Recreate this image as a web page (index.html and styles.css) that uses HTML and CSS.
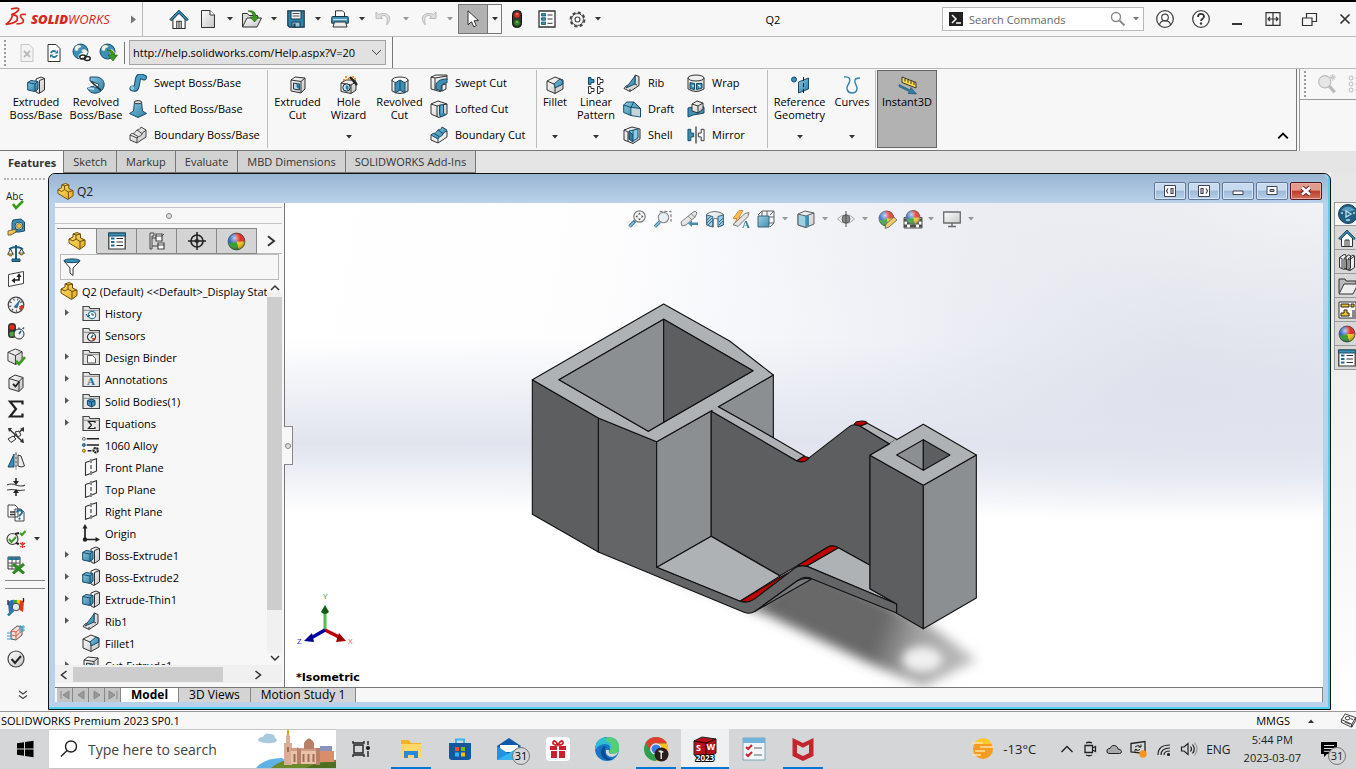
FILE: index.html
```html
<!DOCTYPE html>
<html lang="en">
<head>
<meta charset="utf-8">
<title>SOLIDWORKS - Q2</title>
<link rel="stylesheet" href="styles.css">
</head>
<body>
<svg class="sprite" aria-hidden="true">
<defs>
<linearGradient id="gBlue" x1="0" y1="0" x2="1" y2="1"><stop offset="0" stop-color="#8ccbe4"/><stop offset="1" stop-color="#2b7ba3"/></linearGradient>
<linearGradient id="gGrey" x1="0" y1="0" x2="1" y2="1"><stop offset="0" stop-color="#fff"/><stop offset="1" stop-color="#c4c4c4"/></linearGradient>
<linearGradient id="gGold" x1="0" y1="0" x2="1" y2="1"><stop offset="0" stop-color="#ffe27a"/><stop offset="1" stop-color="#e3aa1c"/></linearGradient>
<radialGradient id="gShine" cx=".4" cy=".3" r=".7"><stop offset="0" stop-color="#fff" stop-opacity=".7"/><stop offset=".5" stop-color="#fff" stop-opacity="0"/><stop offset="1" stop-color="#000" stop-opacity=".35"/></radialGradient>
</defs>
<symbol id="caret" viewBox="0 0 6 4"><path d="M0 0h6L3 3.500z" fill="currentColor"/></symbol>
<symbol id="tri" viewBox="0 0 5 8"><path d="M0 0l5 4-5 4z" fill="currentColor"/></symbol>
<symbol id="home" viewBox="0 0 18 18"><path d="M3.500 9v8.500h11V9L9 3.500z" fill="#fff" stroke="#333"/><path d="M7 17v-6h4v6M9 11v6" fill="none" stroke="#333"/><path d="M.7 9.500L9 1l8.300 8.500-1.500 1L9 3.800 2.200 10.500z" fill="#3d8fb5" stroke="#123f59" stroke-width=".9"/></symbol>
<symbol id="doc" viewBox="0 0 18 18"><path d="M2.500 .5h8.500l4.500 4.500v12.500h-13z" fill="url(#gGrey)" stroke="#333"/><path d="M11 .5V5h4.500" fill="#fff" stroke="#333"/></symbol>
<symbol id="open" viewBox="0 0 20 18"><path d="M.5 17V3.500h5l1.500 2h8.500V8" fill="#ddd" stroke="#333"/><path d="M.5 17L5 8h14.500L15 17z" fill="url(#gGrey)" stroke="#333"/><path d="M6 1c5-1 8 1 8 6h3l-4.500 5L8 7h3c0-3-1-5-5-6z" fill="#3a9a1c" stroke="#1d6508" stroke-width=".6"/></symbol>
<symbol id="save" viewBox="0 0 18 18"><path d="M.8 .8h16.400v16.400H2.500L.8 15.500z" fill="#2f84ab" stroke="#16384c" stroke-width="1.200"/><path d="M4 1h10v8H4z" fill="#f2f2f2" stroke="#16384c"/><path d="M5.500 3.500h7M5.500 6h7" stroke="#555"/><path d="M5 12h8v5H5z" fill="#9fc4d6" stroke="#16384c"/><path d="M6.500 13.500h2V17h-2z" fill="#16384c"/></symbol>
<symbol id="print" viewBox="0 0 18 18"><path d="M4.500 7V.8h7l2 2V7z" fill="#fff" stroke="#333"/><path d="M.7 7.500q0-1 1-1h14.600q1 0 1 1v5.700H.7z" fill="#3d8fb5" stroke="#16384c"/><path d="M2 9.500h14" stroke="#bfe2f0" stroke-width="1.200"/><path d="M3.500 12h11l1.500 5H2z" fill="#eee" stroke="#333"/></symbol>
<symbol id="undo" viewBox="0 0 18 18"><path d="M1 2v6.500h6.500L5.500 6.500C10 4 14 6 11.500 15 18 9 14 .5 3.500 4.500z" fill="#e0e0e0" stroke="#bbb"/></symbol>
<symbol id="redo" viewBox="0 0 18 18"><path d="M17 2v6.500h-6.500l2-2C8 4 4 6 6.500 15 0 9 4 .5 14.500 4.500z" fill="#e0e0e0" stroke="#bbb"/></symbol>
<symbol id="cursor" viewBox="0 0 18 18"><path d="M4 .8v14l3.500-3 2.300 5 2.600-1.200-2.300-4.800 4.400-.3z" fill="#fff" stroke="#333"/></symbol>
<symbol id="light" viewBox="0 0 18 18"><rect x="4.500" y=".5" width="9" height="17" rx="4" fill="#33332f" stroke="#111"/><circle cx="9" cy="5" r="2.800" fill="#e8261a"/><circle cx="9" cy="12.800" r="2.800" fill="#2c8a1d"/><path d="M8 4h2M8 12h2" stroke="#fff" stroke-opacity=".6"/></symbol>
<symbol id="opts" viewBox="0 0 18 18"><path d="M1 1h16v16H1z" fill="#fff" stroke="#333" stroke-width="1.300"/><path d="M3.500 3.500h4v2.500h-4zM3.500 7.700h4v2.500h-4zM3.500 12h4v2.500h-4z" fill="#3d8fb5" stroke="#174b67" stroke-width=".8"/><path d="M9.500 5h5M9.500 9h5M9.500 13.300h5" stroke="#333"/></symbol>
<symbol id="gear" viewBox="0 0 18 18"><circle cx="9" cy="9" r="7.300" fill="none" stroke="#444" stroke-width="2.200" stroke-dasharray="3.400 2.330"/><circle cx="9" cy="9" r="6.300" fill="#f7f7f7" stroke="#444"/><circle cx="9" cy="9" r="2.600" fill="#fff" stroke="#444" stroke-width="1.200"/></symbol>
<symbol id="user" viewBox="0 0 18 18"><circle cx="9" cy="9" r="8.300" fill="#fff" stroke="#444" stroke-width="1.300"/><circle cx="9" cy="7.500" r="3.300" fill="none" stroke="#444" stroke-width="1.200"/><path d="M3.500 15c.5-3.500 3-4.300 5.500-4.300s5 .8 5.500 4.300" fill="none" stroke="#444" stroke-width="1.200"/></symbol>
<symbol id="help" viewBox="0 0 18 18"><circle cx="9" cy="9" r="8.300" fill="#fff" stroke="#444" stroke-width="1.300"/><path d="M6 7c0-4 6-4 6-.5 0 2.300-3 2.200-3 4.500" fill="none" stroke="#333" stroke-width="1.800"/><circle cx="9" cy="13.500" r="1.200" fill="#333"/></symbol>
<symbol id="minimize" viewBox="0 0 18 18"><path d="M4 14h10" stroke="#333" stroke-width="2"/></symbol>
<symbol id="span" viewBox="0 0 18 18"><path d="M2 2.700h14v12.600H2zM9 2v14M4 9h10M6 7L4 9l2 2M12 7l2 2-2 2" fill="none" stroke="#333" stroke-width="1.200"/></symbol>
<symbol id="restore" viewBox="0 0 18 18"><path d="M6.500 8V3.500h10v8H12M2.500 8h9.500v7.500H2.500z" fill="none" stroke="#333" stroke-width="1.200"/></symbol>
<symbol id="close" viewBox="0 0 18 18"><path d="M4.500 4.500l9 9M13.500 4.500l-9 9" stroke="#333" stroke-width="1.700"/></symbol>
<symbol id="mag" viewBox="0 0 18 18"><circle cx="7" cy="7" r="4.500" fill="none" stroke="currentColor" stroke-width="1.400"/><path d="M10.500 10.500l5 5" stroke="currentColor" stroke-width="1.800"/></symbol>
<symbol id="docx" viewBox="0 0 18 18"><path d="M3 .5h8l4 4v13H3z" fill="#f3f3f3" stroke="#c4c4c4"/><path d="M6 7l6 6M12 7l-6 6" stroke="#bbb" stroke-width="1.800"/></symbol>
<symbol id="docr" viewBox="0 0 18 18"><path d="M3 .5h8l4 4v13H3z" fill="#fff" stroke="#333"/><path d="M6 9q1-3 5-1.500M12 11q-1 3-5 1.500" fill="none" stroke="#2b7ba3" stroke-width="1.800"/><path d="M9.500 9.500H13V6zM8.500 10.500H5V14z" fill="#2b7ba3"/></symbol>
<symbol id="globe" viewBox="0 0 18 18"><circle cx="8.500" cy="8.500" r="7.500" fill="#3a8fb8" stroke="#1a4d68"/><path d="M3 4c2-3 5-2 6-1s-1 2-2 2 0 3-2 3-3-1-2-4zM9 7l4-1 3 3-3 5-2-1V10z" fill="#eaf5e8" stroke="#888" stroke-width=".4"/></symbol>
<symbol id="globelink" viewBox="0 0 19 19"><use href="#globe" width="18" height="18"/><path d="M9 15.500q-1.500-3 1.500-3.500h3M11 16h3q3-.5 2-3.500" fill="none" stroke="#fff" stroke-width="4"/><ellipse cx="10.800" cy="14" rx="3" ry="2" fill="none" stroke="#222" stroke-width="1.500"/><ellipse cx="15.200" cy="15.500" rx="3" ry="2" fill="none" stroke="#222" stroke-width="1.500"/></symbol>
<symbol id="globedown" viewBox="0 0 19 19"><use href="#globe" width="18" height="18"/><path d="M8 7c5-1 7 2 7 5h3.500L14 18l-5-6h3c0-2-1-4-4-5z" fill="#3a9a1c" stroke="#1d6508" stroke-width=".6"/></symbol>
<symbol id="extrude" viewBox="0 0 18 18"><path d="M9 3l5-2 3.500 1.500V14L12 17.500 9 16z" fill="url(#gGrey)" stroke="#333"/><path d="M12.500 4.500l5-2M12.500 4.500V17" stroke="#333" fill="none"/><path d="M.7 6.500L4 4.500l7 1v7.500L8 15.500l-7.300-1.500z" fill="url(#gBlue)" stroke="#174b67"/><path d="M.7 6.500l7.300 1.500 3-2.500M8 8v7.500" fill="none" stroke="#174b67"/></symbol>
<symbol id="revolve" viewBox="0 0 18 18"><path d="M3 1h6c6 0 9 5 8 9-1 5-6 8-11 7-3-.7-5-3-5.500-5l6-2c1 3 6 2 5-2L3 5z" fill="url(#gBlue)" stroke="#174b67"/><path d="M4 5.500l10 9" stroke="#222" stroke-width="1.500"/><path d="M1 12l6 1" stroke="#bfe2f0" stroke-width="1.500"/></symbol>
<symbol id="sweep" viewBox="0 0 18 18"><path d="M3.500 14.500c6 2 4-8 6-11 1-2 3-1 5.500 0" fill="none" stroke="#174b67" stroke-width="6" stroke-linecap="round"/><path d="M3.500 14.500c6 2 4-8 6-11 1-2 3-1 5.500 0" fill="none" stroke="#4a9dc2" stroke-width="4" stroke-linecap="round"/><circle cx="3.300" cy="14" r="1.900" fill="#8ccbe4"/></symbol>
<symbol id="loft" viewBox="0 0 18 18"><path d="M5.500 2h7l1 9 4 2.500L9 17.500 .5 13.500 4.500 11z" fill="url(#gBlue)" stroke="#174b67"/><ellipse cx="9" cy="2.200" rx="3.600" ry="1.600" fill="#ddd" stroke="#333"/></symbol>
<symbol id="boundary" viewBox="0 0 18 18"><path d="M1 9c2-3 4 0 6-4 2-3 4 0 5-4l5 3v7l-9 6-7-3z" fill="url(#gGrey)" stroke="#444"/><path d="M1 9l7 3c1-2 4-1 5-4s3-2 4-4M8 12v5M4 7.500l5 3M8 4l5 3.500" stroke="#444" fill="none"/></symbol>
<symbol id="cutbound" viewBox="0 0 18 18"><path d="M1 9v5l7 3 9-6V5z" fill="#eee" stroke="#333"/><path d="M1 9c2-3 4 0 6-4 2-3 4 0 5-4l5 3c-1 3-3 1-4 4s-4 2-5 5z" fill="url(#gBlue)" stroke="#174b67"/><path d="M4 7.500l5 3M8 4l5 3.500M8 13v4" stroke="#174b67" fill="none"/></symbol>
<symbol id="cutex" viewBox="0 0 18 18"><path d="M2 4l4-3 10 1v11l-4 4-10-2z" fill="url(#gGrey)" stroke="#333"/><path d="M2 4l10 1.500L16 2M12 5.500V17" fill="none" stroke="#333"/><path d="M4.500 7l6 1v6l-6-1z" fill="#b9dceb" stroke="#333"/><path d="M7.500 7.500l3 .5v6l-3-3z" fill="#2b7ba3"/></symbol>
<symbol id="hole" viewBox="0 0 18 18"><path d="M1 7l5-3h9l1 2v8l-5 3.500L1 15.500z" fill="url(#gGrey)" stroke="#333"/><path d="M1 7l10 2 5-3M11 9v8.500" fill="none" stroke="#333"/><circle cx="6.500" cy="11.500" r="3.700" fill="#bfe2f0" stroke="#222"/><path d="M6 9q4 1 2 5-3 0-2-5z" fill="#2b7ba3"/><path d="M10 1l7 8" stroke="#222" stroke-width="2.400"/><path d="M5 1h2M3 4h2M8 2l1 1M12 1h2M14 3h2" stroke="#e2751a" stroke-width="1.500"/></symbol>
<symbol id="cutrev" viewBox="0 0 18 18"><path d="M1 4v11q8 5 16 0V4z" fill="url(#gGrey)" stroke="#333"/><ellipse cx="9" cy="4" rx="8" ry="3" fill="#fff" stroke="#333"/><path d="M9 4l-5 3v10l5-3 5 3V7z" fill="#3d8fb5" stroke="#174b67"/><path d="M9 4v10" stroke="#174b67"/></symbol>
<symbol id="cutsweep" viewBox="0 0 18 18"><path d="M1 3l5-2h11v5l-3 2v8l-4 1.500L1 15z" fill="url(#gGrey)" stroke="#333"/><path d="M6 15C5 8 9 5 17 5v4c-4 0-6 2-6 8z" fill="#3d8fb5" stroke="#174b67"/><path d="M1 3l4 1v12M5 4l12-2" stroke="#333" fill="none"/><path d="M12 11l4-1v5l-4 2z" fill="#eee" stroke="#333"/></symbol>
<symbol id="cutloft" viewBox="0 0 18 18"><path d="M1 4l7-3 9 3v10l-8 3.500L1 14z" fill="url(#gGrey)" stroke="#333"/><path d="M1 4l6 2v11M7 6l10-2" stroke="#333" fill="none"/><path d="M9.500 5h4v8l2 2-5 2-1-3z" fill="#3d8fb5" stroke="#174b67"/><path d="M12 5.500v8" stroke="#8ccbe4"/></symbol>
<symbol id="fillet" viewBox="0 0 18 18"><path d="M1 5l8-4 8 3v9l-8 4.500L1 14z" fill="url(#gGrey)" stroke="#333"/><path d="M1 5l7 3q1 1 1 3v6.500" fill="none" stroke="#333"/><path d="M8 8l6-5q3 1 3 5l-8 4q0-3-1-4z" fill="url(#gBlue)" stroke="#174b67"/></symbol>
<symbol id="linear" viewBox="0 0 18 18"><path d="M1.500 1.500h2.500v2h3v3H4v2H1.500z" fill="#3d8fb5" stroke="#174b67"/><path d="M10.500 1.500H13v2h3v3h-3v2h-2.500zM1.500 10.500H4v2h3v3H4v2H1.500zM10.500 10.500H13v2h3v3h-3v2h-2.500z" fill="#fff" stroke="#333"/></symbol>
<symbol id="rib" viewBox="0 0 18 18"><path d="M12 1l4 1.500v9L7 17.500l-6-3L3 12l9-4z" fill="url(#gGrey)" stroke="#333"/><path d="M3 14l9-12v8z" fill="url(#gBlue)" stroke="#174b67"/><path d="M12 10l2 1M7 17v-2" stroke="#333"/></symbol>
<symbol id="draft" viewBox="0 0 18 18"><path d="M.7 5l3-3h7l6.800 6.500v8.500L8 15.500l-7.300-3z" fill="url(#gBlue)" stroke="#174b67"/><path d="M.7 5L8 7.500 10.700 2M8 7.500v8M8 7.500l9.500 1" stroke="#174b67" fill="none"/><path d="M8.500 8l8.500 1v7.500l-8.500-1.500z" fill="#c4d4dc"/></symbol>
<symbol id="shell" viewBox="0 0 18 18"><path d="M1 4l8-3 8 2v10l-7 4.500L1 14z" fill="url(#gGrey)" stroke="#333"/><path d="M6 5l9-2v9l-5 3z" fill="#8ccbe4" stroke="#174b67"/><path d="M6 5v8l4 3v-7zM10 9V4" fill="#2b7ba3" stroke="#174b67"/><path d="M1 4l4 2v9" stroke="#333" fill="none"/></symbol>
<symbol id="wrap" viewBox="0 0 18 18"><path d="M1 4v11q8 5 16 0V4z" fill="url(#gGrey)" stroke="#333"/><ellipse cx="9" cy="4" rx="8" ry="3" fill="#eee" stroke="#333"/><path d="M3 8.500l4.500 1v6l-4.500-1zM9.500 9.500h5.500v4.500l-5.500 1.500z" fill="#3d8fb5" stroke="#174b67"/><path d="M5 12h2M11 11.500h2v2" stroke="#fff" fill="none"/></symbol>
<symbol id="intersect" viewBox="0 0 18 18"><path d="M1 8l11-2 5 1v6l-5 1-6 1-5 2z" fill="#3d8fb5" stroke="#174b67"/><path d="M5 4l5-3 6 2v6l-5 4-6-2z" fill="url(#gGrey)" stroke="#333"/><path d="M5 4l6 2 5-3M11 6v7" stroke="#333" fill="none"/></symbol>
<symbol id="mirror" viewBox="0 0 19 18"><path d="M1 3h3v4h3v4H4v4H1z" fill="#3d8fb5" stroke="#174b67"/><path d="M18 3h-3v4h-3v4h3v4h3z" fill="#fff" stroke="#333"/><path d="M9.500 0v18" stroke="#222" stroke-width="1.200"/></symbol>
<symbol id="refgeo" viewBox="0 0 18 18"><circle cx="3" cy="3.500" r="2.500" fill="#3d8fb5" stroke="#174b67"/><path d="M7.500 6l10-4v11l-10 4z" fill="url(#gBlue)" stroke="#174b67"/><path d="M12.500 1v17" stroke="#222" stroke-dasharray="4 2"/></symbol>
<symbol id="curves" viewBox="0 0 18 18"><path d="M1 1c8-1 6 5 4 8s-1 8 4 8 6-4 4-8-2-7 4-7" fill="none" stroke="#3384aa" stroke-width="1.400"/></symbol>
<symbol id="instant" viewBox="0 0 19 19"><path d="M4 1l14 5.500V12L4 6.500z" fill="#ffdf4d" stroke="#333"/><path d="M7 2.500v3M10 3.700v3M13 5v3M16 6v3" stroke="#333"/><path d="M1 8.500l11 5.500 1-2.500 5.500 6.500-8.500-.5 1.500-1.700L1 10.500z" fill="#2f7da5" stroke="#174b67" stroke-width=".6"/></symbol>
<symbol id="tape" viewBox="0 0 18 18"><path d="M6 2l8-1 3.500 3v9L12 14H5V5z" fill="#3d8fb5" stroke="#174b67"/><circle cx="12" cy="8" r="4" fill="#fff" stroke="#174b67"/><circle cx="12" cy="8" r="2.500" fill="#f2c12e" stroke="#333" stroke-width=".6"/><path d="M1 13l8-2v3l-5 3H1z" fill="url(#gGold)" stroke="#333" stroke-width=".7"/></symbol>
<symbol id="scale" viewBox="0 0 18 18"><path d="M9 1v14M2 5q7-4 14 0" stroke="#1d5f83" stroke-width="2" fill="none"/><path d="M5 15h8v2.500H5z" fill="#2b7ba3" stroke="#174b67"/><path d="M1 10l2.500-5L6 10M12 9l2.500-4L17 9" fill="none" stroke="#333"/><path d="M.5 10h6q-3 4-6 0zM11.500 9h6q-3 4-6 0z" fill="#f2c12e" stroke="#333" stroke-width=".7"/></symbol>
<symbol id="sect" viewBox="0 0 18 18"><path d="M1.500 4.500l15-3v12l-15 3z" fill="#fff" stroke="#444"/><path d="M12 5v5H7" fill="none" stroke="#222" stroke-width="1.700"/><path d="M12 3l2.500 4h-5zM4.500 10.500L8 7.500v6z" fill="#222"/></symbol>
<symbol id="gauge" viewBox="0 0 18 18"><circle cx="9" cy="9" r="7.800" fill="#f1f1f1" stroke="#444" stroke-width="1.200"/><circle cx="9" cy="9" r="5.800" fill="none" stroke="#444" stroke-width="2" stroke-dasharray="1 3"/><path d="M12 10h5l-3 5z" fill="#e0301e"/><path d="M7 11l6-7-3 8z" fill="#2b7ba3" stroke="#174b67" stroke-width=".6"/></symbol>
<symbol id="perf" viewBox="0 0 18 18"><rect x="1" y="1" width="8" height="15" rx="3.500" fill="#33332f"/><circle cx="5" cy="5" r="2.600" fill="#e8261a"/><circle cx="5" cy="12" r="2.600" fill="#4da33d"/><circle cx="12" cy="12" r="5" fill="#eef4f6" stroke="#333"/><path d="M12 12l2-3M12 5.500v1.500M15.500 7l1.500-1.500" stroke="#1d5f83" stroke-width="1.500"/></symbol>
<symbol id="cube" viewBox="0 0 18 18"><path d="M1 4.500L9 1l7 3v10l-7 3.500-8-4z" fill="url(#gGrey)" stroke="#333"/><path d="M1 4.500l8 3.500 7-4M9 8v9.500" fill="none" stroke="#333"/></symbol>
<symbol id="cubecheck" viewBox="0 0 19 19"><use href="#cube" width="17" height="17"/><path d="M9 13l3 3 6-7" fill="none" stroke="#3a9a1c" stroke-width="2.600"/></symbol>
<symbol id="cubecheck2" viewBox="0 0 18 18"><path d="M2 4.500l6-3.500 8 2.500v10l-4 4-10-3z" fill="url(#gGrey)" stroke="#333"/><path d="M2 4.500l10 3 4-4M12 7.500v10" fill="none" stroke="#333"/><path d="M6 10l2.500 2.500 4-5" fill="none" stroke="#222" stroke-width="1.800"/></symbol>
<symbol id="sigma" viewBox="0 0 18 18"><path d="M15.500 4.500V1.500H3L9 9l-6 7.500h12.500v-3" fill="none" stroke="#222" stroke-width="2.200"/></symbol>
<symbol id="nodes" viewBox="0 0 18 18"><path d="M2 3l14 13M16 3L3 14" stroke="#333" stroke-width="1.400"/><path d="M1 2l4 0-3 4zM17 1v5l-4-3zM17 17l-4-1 3-4z" fill="#333"/><path d="M1 13l5-3 3 3-5 3.500zM8 6l4-1 2 4-3 2z" fill="#eee" stroke="#333"/></symbol>
<symbol id="symm" viewBox="0 0 18 18"><path d="M1 15L7 2v13z" fill="#3d8fb5" stroke="#174b67"/><path d="M9 .5v17" stroke="#333" stroke-dasharray="3 1"/><path d="M11 3l3 1 3.500 10-3.500 1-3-1z" fill="#eee" stroke="#333"/></symbol>
<symbol id="thick" viewBox="0 0 18 18"><path d="M0 7q4-2 9 0t9 0M0 12q5-1 9 0t9 0" stroke="#444" fill="none" stroke-width="1.200"/><path d="M9 0v4M9 18v-4" stroke="#222" stroke-width="1.500"/><path d="M6 3h6L9 7zM6 15h6l-3-4z" fill="#222"/></symbol>
<symbol id="docq" viewBox="0 0 18 18"><path d="M1 1h7l3 3v9H1zM8 5h6l3 3v9H8z" fill="#fff" stroke="#444"/><path d="M3 8h5M3 10.500h5" stroke="#333" stroke-width="1.300"/><path d="M10 8.500c0-3 5-3 5 0 0 2-2.500 1.500-2.500 4" fill="none" stroke="#1d6b94" stroke-width="1.800"/><circle cx="12.500" cy="14.700" r="1.100" fill="#1d6b94"/></symbol>
<symbol id="compare" viewBox="0 0 20 18"><circle cx="6.500" cy="9" r="5.500" fill="#f1f1f1" stroke="#444" stroke-width="1.200"/><path d="M3 9l2.500 3L10 7" fill="none" stroke="#3a9a1c" stroke-width="2"/><path d="M9 4l4-1M10 13l3 1" stroke="#222" stroke-width="2"/><path d="M14 3l2 2 3.500-4" fill="none" stroke="#3a9a1c" stroke-width="2"/><path d="M14 13l5 4M19 13l-5 4M16.500 12v6" stroke="#e0301e" stroke-width="1.400"/></symbol>
<symbol id="excel" viewBox="0 0 18 18"><path d="M1 1h12v12H1z" fill="#fff" stroke="#333"/><path d="M1 1h12v3H1z" fill="#2b7ba3"/><path d="M1 7h12M1 10h12M5 1v12M9 1v12" stroke="#555"/><path d="M6 8l11 9.500M17 8L6 17.500" stroke="#2f8b26" stroke-width="3"/></symbol>
<symbol id="sim" viewBox="0 0 18 18"><path d="M1 4q7-4 16-1l-1 11q-6-5-14 1z" fill="#e8d21f"/><path d="M1 4q4-3 7-2l-1 10q-3 0-5 3z" fill="#2b69c9"/><path d="M6 2h4l-1 8-3 1z" fill="#37a83a"/><path d="M13 2.500l4 .5-1 11-4-2.500z" fill="#dd3a1d"/><circle cx="9" cy="9" r="3.800" fill="#dfe9ef" stroke="#444"/><path d="M6.500 12L1 17.500" stroke="#2b7ba3" stroke-width="2.500"/><path d="M1 2v5M16.500 0v4" stroke="#222" stroke-width="1.300"/></symbol>
<symbol id="flow" viewBox="0 0 18 18"><path d="M4 7l6-5 5 1v8l-6 5-5-1z" fill="#f5dcd6" stroke="#555"/><path d="M4 7l5 1 6-5M9 8v8M4 11l5 1 6-5" stroke="#d9604e" fill="none"/><path d="M0 9h5M0 12h5M0 15h6M12 3h6M13 6h5M13 1v7M16 1v7" stroke="#3a9fd0"/></symbol>
<symbol id="okcircle" viewBox="0 0 18 18"><circle cx="9" cy="9" r="8" fill="url(#gGrey)" stroke="#444" stroke-width="1.200"/><path d="M4.500 9l3.500 4 6-7" fill="none" stroke="#222" stroke-width="2"/></symbol>
<symbol id="dchev" viewBox="0 0 10 10"><path d="M1 1l4 3 4-3M1 5.500l4 3 4-3" fill="none" stroke="#444" stroke-width="1.300"/></symbol>
<symbol id="part" viewBox="0 0 18 18"><path d="M1 7l4-2V2l4-1.500L12.500 2v4L17 8v5.500L11.500 17.500 1 11z" fill="url(#gGold)" stroke="#6b4c05"/><path d="M1 7l4 2 3-2V3L5 2M8 3l4.500-1M8 7l4 2.500 5-1.500M12 9.500V17" fill="none" stroke="#6b4c05"/></symbol>
<symbol id="prop" viewBox="0 0 18 18"><path d="M.8 1h16.400v16H.8z" fill="#fff" stroke="#333" stroke-width="1.200"/><path d="M.5 1h17v3H.5z" fill="#3d8fb5" stroke="#174b67"/><path d="M3 6.500h3.500M3 10h3.500M3 13.500h3.500" stroke="#1d6b94" stroke-width="2"/><path d="M8.500 6.500h6.500M8.500 10h6.500M8.500 13.500h6.500" stroke="#333"/></symbol>
<symbol id="config" viewBox="0 0 18 18"><path d="M2 1h4v3H4v13H2zM4 6h5M4 14h7" fill="#ddd" stroke="#444"/><path d="M8 2h6v7H8zM10 11h6v6h-6z" fill="#fff" stroke="#444" stroke-width="1.200"/><path d="M8 4h6l2-2M10 13h6" stroke="#444" fill="none"/></symbol>
<symbol id="target" viewBox="0 0 18 18"><circle cx="9" cy="9" r="6" fill="none" stroke="#222" stroke-width="1.600"/><circle cx="9" cy="9" r="1.800" fill="none" stroke="#222"/><path d="M9 0v18M0 9h18" stroke="#222" stroke-width="1.500"/></symbol>
<symbol id="sphere" viewBox="0 0 18 18"><circle cx="9" cy="9" r="8" fill="#2f66c4"/><path d="M9 9L8 1q8-1 9 8l-5 1z" fill="#df2c20"/><path d="M9 9l8 0q0 6-6 8z" fill="#f2c420"/><path d="M9 9l2 8q-8 1-9.500-6z" fill="#2f9c31"/><circle cx="9" cy="9" r="8" fill="url(#gShine)" stroke="#444" stroke-width=".7"/></symbol>
<symbol id="chevr" viewBox="0 0 10 10"><path d="M2.500 1l5 4-5 4" fill="none" stroke="currentColor" stroke-width="1.600"/></symbol>
<symbol id="chevu" viewBox="0 0 10 10"><path d="M1 7l4-4 4 4" fill="none" stroke="currentColor" stroke-width="1.500"/></symbol>
<symbol id="filter" viewBox="0 0 18 18"><path d="M1 3l6 7v5l3 2.500V10l7-7z" fill="#fff" stroke="#333"/><ellipse cx="9" cy="2.800" rx="8" ry="1.900" fill="#3d8fb5" stroke="#174b67"/></symbol>
<symbol id="folder" viewBox="0 0 18 18"><path d="M1 16.500V2.500h6l1 2h9.500v12z" fill="#e6e6e6" stroke="#444" stroke-width="1.200"/><path d="M1 6.300h16" stroke="#888"/></symbol>
<symbol id="fhistory" viewBox="0 0 18 18"><use href="#folder" width="18" height="18"/><circle cx="10" cy="11" r="3.700" fill="#fff" stroke="#2b7ba3" stroke-width="1.200"/><path d="M10 9v2h2M4 10l2 3 2-2" fill="none" stroke="#174b67"/></symbol>
<symbol id="fsensor" viewBox="0 0 18 18"><use href="#folder" width="18" height="18"/><circle cx="9.500" cy="11" r="4" fill="#fff" stroke="#333" stroke-width="1.200"/><path d="M9 12l2-3" stroke="#1d6b94" stroke-width="1.500"/><path d="M10 12h3.500l-2.500 3z" fill="#e0301e"/></symbol>
<symbol id="fbinder" viewBox="0 0 18 18"><use href="#folder" width="18" height="18"/><path d="M5.500 7.500h5l3 3v4.500h-8z" fill="#fff" stroke="#555"/></symbol>
<symbol id="fbody" viewBox="0 0 18 18"><use href="#folder" width="18" height="18"/><path d="M5.500 8.500l4-1.500 3.500 1.500v4.500l-3.500 2-4-2z" fill="#3d8fb5" stroke="#174b67"/><path d="M5.500 8.500l4 1.500 3.500-1.500M9.500 10v5" fill="none" stroke="#174b67"/></symbol>
<symbol id="feq" viewBox="0 0 18 18"><use href="#folder" width="18" height="18"/><path d="M13 9V7.500H6.500l3 3.500-3 3.500H13V13" fill="none" stroke="#222" stroke-width="1.200"/></symbol>
<symbol id="material" viewBox="0 0 19 18"><circle cx="2" cy="2.500" r="1.600" fill="#ddd" stroke="#555" stroke-width=".8"/><circle cx="2" cy="9" r="1.600" fill="#3d8fb5" stroke="#174b67" stroke-width=".8"/><circle cx="2" cy="15" r="1.600" fill="#f2c12e" stroke="#6b4c05" stroke-width=".8"/><path d="M5 2.500h13M5 9h13M6 15h4" stroke="#222" stroke-width="1.600"/><circle cx="14.500" cy="14.500" r="2.300" fill="none" stroke="#222" stroke-width="2.400" stroke-dasharray="2 .6"/></symbol>
<symbol id="plane" viewBox="0 0 18 18"><path d="M3.500 4.500L8 3M10 2.300l4.500-1.600V13L10 15M8 15.800L3.500 17.300V4.500M9 1v4M9 7v4M9 13v4" fill="none" stroke="#333" stroke-width="1.100"/></symbol>
<symbol id="origin" viewBox="0 0 18 18"><path d="M3 3v12.500h12" fill="none" stroke="#222" stroke-width="1.700"/><path d="M0.500 4.500L3 0l2.500 4.500zM13.500 13l4.500 2.500L13.500 18z" fill="#222"/><circle cx="3" cy="15.500" r="2.200" fill="#222"/></symbol>
<symbol id="zoomfit" viewBox="0 0 18 18"><path d="M7 11L1.500 16.500" stroke="#1d5f83" stroke-width="3.400"/><path d="M6 12L1.500 16.500" stroke="#6db9da" stroke-width="1.600"/><circle cx="11.500" cy="6.500" r="5.700" fill="#f5f8fa" stroke="#666" stroke-width="1.200"/><path d="M11.500 2.500l1.500 2h-3zM11.500 10.500l1.500-2h-3zM7.500 6.500l2-1.500v3zM15.500 6.500l-2-1.500v3z" fill="#333"/></symbol>
<symbol id="zoomarea" viewBox="0 0 19 18"><path d="M6 1h12v12" fill="none" stroke="#444" stroke-dasharray="3 2"/><path d="M6 12l-5 5" stroke="#1d5f83" stroke-width="3.400"/><path d="M6 12l-5 5" stroke="#6db9da" stroke-width="1.600"/><circle cx="10" cy="7.500" r="5.500" fill="#e3eff5" stroke="#777" stroke-width="1.200"/></symbol>
<symbol id="prevview" viewBox="0 0 18 18"><path d="M1 12L12 3l3-2 2 2-2 4-9 8-4 1z" fill="url(#gGrey)" stroke="#666"/><path d="M8 6l4 4M11 3.500l4 4" stroke="#777"/><path d="M8 13.500l4-3v2h6v2.500h-6v2z" fill="#2b7ba3"/></symbol>
<symbol id="section" viewBox="0 0 18 18"><path d="M.7 4q8-5 16.600 0v11l-5 2v-8q-3-1-5 0v8l-6.600-2z" fill="url(#gGrey)" stroke="#555"/><path d="M.7 5l6 1.500V17L.7 15zM12 6.500L17.300 5v10L12 17z" fill="#8ccbe4" stroke="#174b67"/><path d="M1 10l4-4M1 13l5-5M2 15l4-4M13 12l4-4M13 15l4-4" stroke="#174b67"/></symbol>
<symbol id="orient" viewBox="0 0 18 18"><path d="M5 1h12v12H5zM1 5l4-4M13 5l4-4M13 17l4-4M10 1v12M5 7h12" fill="none" stroke="#444"/><path d="M1 6h11v11H1z" fill="url(#gBlue)" stroke="#174b67"/></symbol>
<symbol id="display" viewBox="0 0 18 18"><path d="M1 4l7-3 9 2v11l-8 3.500L1 15z" fill="url(#gGrey)" stroke="#444"/><path d="M1 4l8 2v11.500L1 15z" fill="#8ccbe4" stroke="#444"/><path d="M9 6l8-3" stroke="#444"/><path d="M9 6l3-1v11.500L9 17.500z" fill="#2b7ba3"/></symbol>
<symbol id="hide" viewBox="0 0 18 18"><path d="M.5 9Q9 0 17.500 9 9 18 .5 9z" fill="#eee" stroke="#999"/><circle cx="9" cy="9" r="4" fill="#777" stroke="#444"/><path d="M9 1v16" stroke="#333"/></symbol>
<symbol id="appear" viewBox="0 0 19 19"><use href="#sphere" width="17" height="17"/><path d="M8 14l8-7 3 3-8 7-4 1.500z" fill="url(#gGold)" stroke="#444" stroke-width=".8"/></symbol>
<symbol id="scene" viewBox="0 0 20 19"><path d="M1 8h18v10.500H1z" fill="#fff" stroke="#333"/><path d="M1 9h3v3H1zM16 9h3v3h-3zM4 12h3v3H4zM13 12h3v3h-3zM1 15h3v3H1zM7 15h6v3H7zM16 15h3v3h-3z" fill="#333"/><use href="#sphere" x="2" y="0" width="16" height="16"/></symbol>
<symbol id="monitor" viewBox="0 0 18 18"><path d="M.7 2h16.600v11H.7z" fill="url(#gGrey)" stroke="#555" stroke-width="1.300"/><path d="M9 13v3.500M5 16.500h8" stroke="#555" stroke-width="1.500"/></symbol>
<symbol id="w-left" viewBox="0 0 18 18"><path d="M3.500 3.500h11v11h-11z" fill="#fff" stroke="#445"/><path d="M7 6.500L5.500 9 7 11.500M10 6.500h2v5h-2z" fill="none" stroke="#445" stroke-width="1.200"/></symbol>
<symbol id="w-right" viewBox="0 0 18 18"><path d="M3.500 3.500h11v11h-11z" fill="#fff" stroke="#445"/><path d="M11 6.500l1.500 2.500-1.500 2.500M6 6.500h2v5H6z" fill="none" stroke="#445" stroke-width="1.200"/></symbol>
<symbol id="w-min" viewBox="0 0 18 18"><path d="M4 9h10v3.500H4z" fill="#fff" stroke="#445"/></symbol>
<symbol id="w-max" viewBox="0 0 18 18"><path d="M4 4.500h10v8H4z" fill="#fff" stroke="#445"/><path d="M7 7.500h4v2H7z" fill="#9bb" stroke="#445"/></symbol>
<symbol id="w-close" viewBox="0 0 18 18"><path d="M5 5.500l8 7M13 5.500l-8 7" stroke="#523" stroke-width="4.500"/><path d="M5 5.500l8 7M13 5.500l-8 7" stroke="#fff" stroke-width="2.700"/></symbol>
<symbol id="compass" viewBox="0 0 20 20"><circle cx="10" cy="10" r="9.500" fill="#215f83" stroke="#123f59"/><path d="M3 6q7-7 14 0-7 3-14 0z" fill="#6db9da" opacity=".7"/><path d="M8 7l5 3-5 3zM3 9h2M15 9h2M8 16h4" fill="none" stroke="#bfe2f0" stroke-width="1.300"/></symbol>
<symbol id="books" viewBox="0 0 18 18"><path d="M1.500 4.500L6 1.500 8 2v13l-2 1.500-4.500-2zM6 5.500l4.500-3.500 2 .5V15l-2.500 2-4-1.500zM10 6l5-4 1.500 1v11.500L12 17.500l-2-.5z" fill="#eee" stroke="#333"/><path d="M1.500 4.500L4 5.500v10M6 5.500l2.500 1V17M10 6l2 .5v11M12 6.500L16.500 3" fill="none" stroke="#333"/></symbol>
<symbol id="folder2" viewBox="0 0 20 18"><path d="M1 16V2h6l1 2h10v3" fill="#bbb" stroke="#333"/><path d="M1 17L6 7h14l-5 10z" fill="#eee" stroke="#333"/></symbol>
<symbol id="palette" viewBox="0 0 18 18"><path d="M1 1h17v16H1z" fill="#fff" stroke="#333"/><path d="M3 3h8v3H3zM13 3h3v3h-3zM6 9h3v3h2v3H3v-3h3z" fill="#f2c12e" stroke="#222"/><path d="M14 9h4v8h-4z" fill="#888"/></symbol>
<symbol id="stamp" viewBox="0 0 18 18"><path d="M1.500 8l4-6 11 4-4 7z" fill="#fff" stroke="#333"/><path d="M1.500 8v3l10.500 5 .5-3M5 10.500l6 2.500M12.500 13v3l4-7V6" fill="none" stroke="#333"/><ellipse cx="8" cy="6.500" rx="2.500" ry="1.800" fill="none" stroke="#333"/><path d="M11 7l3 1" stroke="#333"/></symbol>
</svg>

<header class="titlebar">
  <div class="brand">
    <svg class="ds" viewBox="0 0 22 20"><g fill="none" stroke="#d9251d" stroke-width="1.700"><path d="M6 2Q15 0 13.500 3 12 5.500 7 7.500"/><path d="M7.500 8.500Q6 14 .8 17.500 13 16 12.500 11 12 7.500 6 7.600"/><path d="M21 7.500q-6-.8-5.500 1.700.3 1 2.500 3.300 1.500 3-2.500 4-1.500.4-4 .4"/></g></svg>
    <span class="wordmark"><b>SOLID</b>WORKS</span>
    <svg class="brand-tri"><use href="#tri"/></svg>
  </div>
  <nav class="quick">
    <button class="qb home" aria-label="Home"><svg class="i20"><use href="#home"/></svg></button>
    <button class="qb" aria-label="New"><svg class="i18"><use href="#doc"/></svg></button><button class="qc" aria-label="New options"><svg class="car"><use href="#caret"/></svg></button>
    <button class="qb" aria-label="Open"><svg class="i20"><use href="#open"/></svg></button><button class="qc" aria-label="Open options"><svg class="car"><use href="#caret"/></svg></button>
    <button class="qb" aria-label="Save"><svg class="i18"><use href="#save"/></svg></button><button class="qc" aria-label="Save options"><svg class="car"><use href="#caret"/></svg></button>
    <button class="qb" aria-label="Print"><svg class="i18"><use href="#print"/></svg></button><button class="qc" aria-label="Print options"><svg class="car"><use href="#caret"/></svg></button>
    <button class="qb" aria-label="Undo"><svg class="i18"><use href="#undo"/></svg></button><button class="qc dim" aria-label="Undo options"><svg class="car"><use href="#caret"/></svg></button>
    <button class="qb" aria-label="Redo"><svg class="i18"><use href="#redo"/></svg></button><button class="qc dim" aria-label="Redo options"><svg class="car"><use href="#caret"/></svg></button>
    <span class="selbox"><button class="sel-main" aria-label="Select"><svg class="i18"><use href="#cursor"/></svg></button><button class="sel-drop" aria-label="Select options"><svg class="car"><use href="#caret"/></svg></button></span>
    <button class="qw" aria-label="Rebuild"><svg class="i18"><use href="#light"/></svg></button>
    <button class="qw" aria-label="File properties"><svg class="i18"><use href="#opts"/></svg></button>
    <button class="qw" aria-label="Options"><svg class="i17"><use href="#gear"/></svg></button><button class="qc narrow" aria-label="Options list"><svg class="car"><use href="#caret"/></svg></button>
  </nav>
  <h1 class="doc-title">Q2</h1>
  <form class="cmd-search">
    <span class="prompt"><svg viewBox="0 0 14 14"><path d="M3 3l4 4-4 4M7 11h5" fill="none" stroke="#fff" stroke-width="1.500"/></svg></span>
    <input type="text" aria-label="Search Commands" placeholder="Search Commands">
    <button type="button" aria-label="Search"><svg class="i18"><use href="#mag"/></svg></button><button type="button" aria-label="Search scope"><svg class="car"><use href="#caret"/></svg></button>
  </form>
  <div class="winctl">
    <button aria-label="Account"><svg class="i18"><use href="#user"/></svg></button>
    <button aria-label="Help"><svg class="i18"><use href="#help"/></svg></button>
    <button aria-label="Minimize"><svg class="i18"><use href="#minimize"/></svg></button>
    <button aria-label="Span displays"><svg class="i18"><use href="#span"/></svg></button>
    <button aria-label="Restore"><svg class="i18"><use href="#restore"/></svg></button>
    <button aria-label="Close"><svg class="i18"><use href="#close"/></svg></button>
  </div>
</header>

<div class="webbar">
  <span class="grip"></span>
  <button aria-label="Stop"><svg class="i18"><use href="#docx"/></svg></button>
  <button aria-label="Refresh"><svg class="i18"><use href="#docr"/></svg></button>
  <button aria-label="Link"><svg class="i19"><use href="#globelink"/></svg></button>
  <button aria-label="Download"><svg class="i19"><use href="#globedown"/></svg></button>
  <div class="addr"><select aria-label="Address"><option>http://help.solidworks.com/Help.aspx?V=20</option></select></div>
</div>

<div class="ribbon-row">
  <div class="ribbon">
    <section class="group g1">
      <button class="big w60"><svg class="i18"><use href="#extrude"/></svg><span>Extruded Boss/Base</span></button>
      <button class="big w60"><svg class="i18"><use href="#revolve"/></svg><span>Revolved Boss/Base</span></button>
      <div class="small-col">
        <button><svg class="i18"><use href="#sweep"/></svg>Swept Boss/Base</button>
        <button><svg class="i18"><use href="#loft"/></svg>Lofted Boss/Base</button>
        <button><svg class="i18"><use href="#boundary"/></svg>Boundary Boss/Base</button>
      </div>
    </section>
    <section class="group g2">
      <button class="big w51"><svg class="i18"><use href="#cutex"/></svg><span>Extruded Cut</span></button>
      <button class="big w51"><svg class="i18"><use href="#hole"/></svg><span>Hole Wizard</span><svg class="car"><use href="#caret"/></svg></button>
      <button class="big w51"><svg class="i18"><use href="#cutrev"/></svg><span>Revolved Cut</span></button>
      <div class="small-col">
        <button><svg class="i18"><use href="#cutsweep"/></svg>Swept Cut</button>
        <button><svg class="i18"><use href="#cutloft"/></svg>Lofted Cut</button>
        <button><svg class="i18"><use href="#cutbound"/></svg>Boundary Cut</button>
      </div>
    </section>
    <section class="group g3">
      <button class="big w36"><svg class="i18"><use href="#fillet"/></svg><span>Fillet</span><svg class="car"><use href="#caret"/></svg></button>
      <button class="big w46"><svg class="i18"><use href="#linear"/></svg><span>Linear Pattern</span><svg class="car"><use href="#caret"/></svg></button>
      <div class="small-col w64">
        <button><svg class="i18"><use href="#rib"/></svg>Rib</button>
        <button><svg class="i18"><use href="#draft"/></svg>Draft</button>
        <button><svg class="i18"><use href="#shell"/></svg>Shell</button>
      </div>
      <div class="small-col">
        <button><svg class="i18"><use href="#wrap"/></svg>Wrap</button>
        <button><svg class="i18"><use href="#intersect"/></svg>Intersect</button>
        <button><svg class="i18"><use href="#mirror"/></svg>Mirror</button>
      </div>
    </section>
    <section class="group g4">
      <button class="big w63"><svg class="i18"><use href="#refgeo"/></svg><span>Reference Geometry</span><svg class="car"><use href="#caret"/></svg></button>
      <button class="big w42"><svg class="i18"><use href="#curves"/></svg><span>Curves</span><svg class="car"><use href="#caret"/></svg></button>
    </section>
    <button class="big instant w60"><svg class="i19"><use href="#instant"/></svg><span>Instant3D</span></button>
    <button class="collapse" aria-label="Collapse ribbon"><svg class="i12"><use href="#chevu"/></svg></button>
  </div>
  <div class="ribbon-side">
    <div class="mini"><span class="grip"></span>
      <svg class="i20" viewBox="0 0 18 18"><circle cx="7" cy="7" r="5.500" fill="#e6e6e6" stroke="#bbb"/><path d="M11 11l5 5.500" stroke="#bbb" stroke-width="3"/><path d="M14 0v6M11 3h6M12 1l4 4M16 1l-4 4" stroke="#ccc"/></svg>
      <svg class="i10" viewBox="0 0 10 18"><path d="M3 1a2 2 0 110 4 2 2 0 010-4M3 7a2 2 0 110 4 2 2 0 010-4M3 13a2 2 0 110 4 2 2 0 010-4M7 3h3M7 9h3M7 15h3" fill="none" stroke="#bbb"/></svg>
    </div>
  </div>
</div>

<nav class="tabs">
  <button class="active">Features</button><button>Sketch</button><button>Markup</button><button>Evaluate</button><button>MBD Dimensions</button><button>SOLIDWORKS Add-Ins</button>
</nav>

<main class="work">
  <aside class="tools">
    <button aria-label="Spelling"><svg class="i20" viewBox="0 0 20 18"><text x="0" y="8" class="svg-abc">Abc</text><path d="M7 12l3 4 7-7" fill="none" stroke="#3a9a1c" stroke-width="2.600"/></svg></button>
    <button aria-label="Measure"><svg class="i18"><use href="#tape"/></svg></button>
    <button aria-label="Mass properties"><svg class="i18"><use href="#scale"/></svg></button>
    <button aria-label="Section properties"><svg class="i18"><use href="#sect"/></svg></button>
    <button aria-label="Sensor"><svg class="i18"><use href="#gauge"/></svg></button>
    <button aria-label="Performance"><svg class="i18"><use href="#perf"/></svg></button>
    <button aria-label="Check"><svg class="i19"><use href="#cubecheck"/></svg></button>
    <button aria-label="Geometry analysis"><svg class="i18"><use href="#cubecheck2"/></svg></button>
    <button aria-label="Equations"><svg class="i18"><use href="#sigma"/></svg></button>
    <button aria-label="Deviation"><svg class="i18"><use href="#nodes"/></svg></button>
    <button aria-label="Symmetry check"><svg class="i18"><use href="#symm"/></svg></button>
    <button aria-label="Thickness"><svg class="i18"><use href="#thick"/></svg></button>
    <button aria-label="Compare documents"><svg class="i18"><use href="#docq"/></svg></button>
    <button class="with-caret" aria-label="Check active document"><svg class="i20"><use href="#compare"/></svg><svg class="car"><use href="#caret"/></svg></button>
    <button aria-label="Design table"><svg class="i18"><use href="#excel"/></svg></button>
    <hr><hr class="second">
    <button aria-label="Simulation"><svg class="i18"><use href="#sim"/></svg></button>
    <button aria-label="Flow"><svg class="i18"><use href="#flow"/></svg></button>
    <button aria-label="Verify"><svg class="i18"><use href="#okcircle"/></svg></button>
    <button class="more" aria-label="More tools"><svg class="i10s"><use href="#dchev"/></svg></button>
  </aside>

  <section class="docwin">
    <header class="docbar">
      <svg class="i17"><use href="#part"/></svg><span>Q2</span>
      <div class="docbtns">
        <button aria-label="Dock left"><svg class="i18"><use href="#w-left"/></svg></button><button aria-label="Dock right"><svg class="i18"><use href="#w-right"/></svg></button><button aria-label="Minimize document"><svg class="i18"><use href="#w-min"/></svg></button><button aria-label="Maximize document"><svg class="i18"><use href="#w-max"/></svg></button><button class="red" aria-label="Close document"><svg class="i18"><use href="#w-close"/></svg></button>
      </div>
    </header>
    <div class="docbody">
      <aside class="panel">
        <div class="splitbar"><i></i></div>
        <nav class="ptabs">
          <button class="on" aria-label="Feature tree"><svg class="i18"><use href="#part"/></svg></button><button aria-label="Properties"><svg class="i18"><use href="#prop"/></svg></button><button aria-label="Configurations"><svg class="i18"><use href="#config"/></svg></button><button aria-label="Dimensions"><svg class="i18"><use href="#target"/></svg></button><button aria-label="Display"><svg class="i19"><use href="#sphere"/></svg></button>
          <button class="next" aria-label="More tabs"><svg class="i12"><use href="#chevr"/></svg></button>
        </nav>
        <div class="filterbox"><svg class="i18"><use href="#filter"/></svg><input type="text" aria-label="Filter tree"></div>
        <div class="treewrap">
          <ul class="tree">
            <li class="root"><svg class="i18"><use href="#part"/></svg>Q2 (Default) &lt;&lt;Default&gt;_Display State 1&gt;</li>
            <li class="ex"><svg class="arr"><use href="#tri"/></svg><svg class="i18"><use href="#fhistory"/></svg>History</li>
            <li><svg class="i18"><use href="#fsensor"/></svg>Sensors</li>
            <li class="ex"><svg class="arr"><use href="#tri"/></svg><svg class="i18"><use href="#fbinder"/></svg>Design Binder</li>
            <li class="ex"><svg class="arr"><use href="#tri"/></svg><svg class="i18" viewBox="0 0 18 18"><use href="#folder" width="18" height="18"/><text x="9" y="15" class="svg-serif">A</text></svg>Annotations</li>
            <li class="ex"><svg class="arr"><use href="#tri"/></svg><svg class="i18"><use href="#fbody"/></svg>Solid Bodies(1)</li>
            <li class="ex"><svg class="arr"><use href="#tri"/></svg><svg class="i18"><use href="#feq"/></svg>Equations</li>
            <li><svg class="i18"><use href="#material"/></svg>1060 Alloy</li>
            <li><svg class="i18"><use href="#plane"/></svg>Front Plane</li>
            <li><svg class="i18"><use href="#plane"/></svg>Top Plane</li>
            <li><svg class="i18"><use href="#plane"/></svg>Right Plane</li>
            <li><svg class="i18"><use href="#origin"/></svg>Origin</li>
            <li class="ex"><svg class="arr"><use href="#tri"/></svg><svg class="i18"><use href="#extrude"/></svg>Boss-Extrude1</li>
            <li class="ex"><svg class="arr"><use href="#tri"/></svg><svg class="i18"><use href="#extrude"/></svg>Boss-Extrude2</li>
            <li class="ex"><svg class="arr"><use href="#tri"/></svg><svg class="i18"><use href="#extrude"/></svg>Extrude-Thin1</li>
            <li class="ex"><svg class="arr"><use href="#tri"/></svg><svg class="i18"><use href="#rib"/></svg>Rib1</li>
            <li><svg class="i18"><use href="#fillet"/></svg>Fillet1</li>
            <li class="ex"><svg class="arr"><use href="#tri"/></svg><svg class="i18"><use href="#cutex"/></svg>Cut-Extrude1</li>
          </ul>
          <div class="vscroll"><svg class="i10s"><use href="#chevu"/></svg><div class="vtrack"><div class="vthumb"></div></div><svg class="i10s flip"><use href="#chevu"/></svg></div>
        </div>
        <div class="hscroll"><svg class="i10s flip"><use href="#chevr"/></svg><div class="htrack"><div class="hthumb"></div></div><svg class="i10s"><use href="#chevr"/></svg></div>
      </aside>

      <section class="view">
        <svg class="scene" viewBox="285 203 1038 484" role="img" aria-label="Q2 part, isometric view">
          <defs><filter id="soft" x="-20%" y="-30%" width="140%" height="160%"><feGaussianBlur stdDeviation="18"/></filter><filter id="soft2" x="-50%" y="-50%" width="200%" height="200%"><feGaussianBlur stdDeviation="14"/></filter>
          <linearGradient id="sh" x1="740" y1="900" x2="1370" y2="1120" gradientUnits="userSpaceOnUse"><stop offset="0" stop-color="#666"/><stop offset=".58" stop-color="#686868"/><stop offset=".76" stop-color="#a4a4a4"/><stop offset="1" stop-color="#bbb"/></linearGradient></defs>
          <g transform="translate(510 290) scale(.33333)">
            <path d="M67 670l200 115 500 170-20 20-480-190z" fill="#999" opacity=".35" filter="url(#soft2)"/>
            <path d="M720 950L905 830 1240 990 1400 1110 1240 1190 1090 1125z" fill="url(#sh)" filter="url(#soft)"/>
            <ellipse cx="1237" cy="1108" rx="60" ry="38" fill="#f0f0f0" filter="url(#soft2)"/>
            <g stroke="#111" stroke-width="3.300" stroke-linejoin="round">
              <path d="M790 255v188L625 350z" fill="#8b8f92"/>
              <path d="M603 363l257 149q20 9 38-9l120-93q12-10 32-2l88 53-58 35v330l-95-53q-18-8-30-3l-93 57-52 30-207-119z" fill="#5d5e60"/>
              <path d="M603 363l22-13 165 93 95 56-25 13z" fill="#aeb2b5"/>
              <path d="M1050 408l22-8 88 48-22 13z" fill="#aeb2b5"/>
              <path d="M862 512l16-11q12-2 19 3-14 18-35 8z" fill="#c00000"/>
              <path d="M1032 403l8-8q20-4 28 0l4 5-22 8z" fill="#c00000"/>
              <path d="M440 832l163-93 207 119-120 76z" fill="#aeb2b5"/>
              <path d="M890 828l95-55 95 53v70l80 46z" fill="#aeb2b5"/>
              <path d="M862 827l93-57q15-6 30 3l-95 55z" fill="#c00000"/>
              <path d="M690 934l120-72 25-14 0 12-95 76z" fill="#c00000"/>
              <path d="M265 384l175 71v377l250 102q22 8 42-6l123-94q10-8 35-5l270 113v27L905 866q-22-12-48 10L735 964q-15 10-33 3L265 786z" fill="#646567"/>
              <path d="M735 964l122-88q22-15 48-9z" fill="#77797b"/>
              <path d="M67 269l198 115v402L67 673z" fill="#5d5e60"/>
              <path d="M440 455l163-92v376l-163 93z" fill="#8b8f92"/>
              <path d="M461 42l198 111 131 102-165 95-22 13-163 92-175-71L67 269zM461 88L147 269l268 155 314-182z" fill="#aeb2b5" fill-rule="evenodd"/>
              <path d="M461 88L147 269l268 155 46-27z" fill="#8b8f92"/>
              <path d="M461 88l268 154-268 155z" fill="#5d5e60"/>
              <path d="M1080 496l160 90v430l-80-46v-28l-80-46z" fill="#5d5e60"/>
              <path d="M1240 586l159-91v429l-159 92z" fill="#8b8f92"/>
              <path d="M1240 403l159 92-159 91-160-90z" fill="#aeb2b5"/>
              <path d="M1240 449l-80 46 80 46z" fill="#8b8f92"/>
              <path d="M1240 449l80 46-80 46z" fill="#5d5e60"/>
            </g>
            <path d="M607 361l17-10" stroke="#aeb2b5" stroke-width="5"/>
            <path d="M1141 461l18-11" stroke="#aeb2b5" stroke-width="5"/>
          </g>
        </svg>
        <div class="hud">
          <button aria-label="Zoom to fit"><svg class="i18"><use href="#zoomfit"/></svg></button>
          <button aria-label="Zoom to area"><svg class="i18"><use href="#zoomarea"/></svg></button>
          <button aria-label="Previous view"><svg class="i18"><use href="#prevview"/></svg></button>
          <button aria-label="Section view"><svg class="i18"><use href="#section"/></svg></button>
          <button aria-label="Annotation views"><svg class="i19" viewBox="0 0 19 18"><path d="M7 0L1 8h4l-3 7 9-8H7l4-7z" fill="#ffb62e" stroke="#b76b0c" stroke-width=".8"/><path d="M1 14L13 3l4-1-1 4-10 10z" fill="url(#gGrey)" stroke="#666"/><text x="14" y="17" class="svg-serif">A</text></svg></button>
          <button class="drop" aria-label="View orientation"><svg class="i18"><use href="#orient"/></svg><svg class="car"><use href="#caret"/></svg></button>
          <button class="drop" aria-label="Display style"><svg class="i18"><use href="#display"/></svg><svg class="car"><use href="#caret"/></svg></button>
          <button class="drop" aria-label="Hide or show"><svg class="i18"><use href="#hide"/></svg><svg class="car"><use href="#caret"/></svg></button>
          <button aria-label="Edit appearance"><svg class="i19"><use href="#appear"/></svg></button>
          <button class="drop" aria-label="Apply scene"><svg class="i20"><use href="#scene"/></svg><svg class="car"><use href="#caret"/></svg></button>
          <button class="drop" aria-label="View settings"><svg class="i18"><use href="#monitor"/></svg><svg class="car"><use href="#caret"/></svg></button>
        </div>
        <button class="handle" aria-label="Collapse panel"><i></i></button>
        <div class="triad">
          <svg viewBox="0 0 60 56" width="60" height="56"><path d="M29 38V16" stroke="#4fc04f" stroke-width="3"/><path d="M25 19l4-7 4 7q-4 4-8 0z" fill="#0a5f12"/><path d="M29 37l16 8" stroke="#c00000" stroke-width="3.500"/><path d="M43 40l7 8-10 1z" fill="#9c0000"/><path d="M29 37l-14 8" stroke="#0000a8" stroke-width="3.500"/><path d="M16 40l-8 8 10 1z" fill="#000090"/><text x="27" y="6" fill="#2a8a2a">Y</text><text x="52" y="51" fill="#f05050">X</text><text x="1" y="51" fill="#3030e8">Z</text></svg>
          <strong>*Isometric</strong>
        </div>
      </section>
    </div>
    <nav class="sheets">
      <button class="nv" aria-label="First"><svg viewBox="0 0 14 14"><path d="M3 3v8M11 3L5 7l6 4z"/></svg></button><button class="nv" aria-label="Previous"><svg viewBox="0 0 14 14"><path d="M10 3L4 7l6 4z"/></svg></button><button class="nv" aria-label="Next"><svg viewBox="0 0 14 14"><path d="M4 3l6 4-6 4z"/></svg></button><button class="nv" aria-label="Last"><svg viewBox="0 0 14 14"><path d="M11 3v8M3 3l6 4-6 4z"/></svg></button>
      <button class="st on">Model</button><button class="st">3D Views</button><button class="st">Motion Study 1</button>
    </nav>
  </section>

  <aside class="taskpane">
    <button class="on" aria-label="3DEXPERIENCE"><svg class="i20"><use href="#compass"/></svg></button>
    <button aria-label="Resources"><svg class="i18"><use href="#home"/></svg></button>
    <button aria-label="Design library"><svg class="i18"><use href="#books"/></svg></button>
    <button aria-label="File explorer"><svg class="i20"><use href="#folder2"/></svg></button>
    <button aria-label="View palette"><svg class="i18"><use href="#palette"/></svg></button>
    <button aria-label="Appearances"><svg class="i18"><use href="#sphere"/></svg></button>
    <button aria-label="Custom properties"><svg class="i18"><use href="#prop"/></svg></button>
  </aside>
</main>

<footer class="status"><span class="grow">SOLIDWORKS Premium 2023 SP0.1</span><span class="units">MMGS</span><svg class="car up"><use href="#caret"/></svg><svg class="i17"><use href="#stamp"/></svg></footer>

<nav class="taskbar">
  <button class="start" aria-label="Start"><svg width="18" height="18" viewBox="0 0 18 18"><path d="M1 3.200l7-1V8.500H1zM9 2l8.500-1.200v7.700H9zM1 9.500h7v6.300l-7-1zM9 9.500h8.500v7.700L9 16z"/></svg></button>
  <label class="tsearch"><svg width="20" height="20" viewBox="0 0 20 20"><circle cx="12" cy="7.500" r="5.500" fill="none" stroke="#222" stroke-width="1.400"/><path d="M8 11.500l-6 6" stroke="#222" stroke-width="1.400"/></svg>
    <input type="text" aria-label="Type here to search" placeholder="Type here to search">
    <svg class="castle" width="80" height="38" viewBox="0 0 80 38">
      <path d="M2 11q0-4 5-4 2-5 7-3 5 0 5 4 3 1 1 4-9 3-18-1z" fill="#a9c9de"/>
      <path d="M0 38q8-10 26-10l14 10z" fill="#5fb2e3"/><path d="M15 38q20-17 65-8v8z" fill="#6b8a2b"/><path d="M50 38q12-7 30-6v6z" fill="#4f6f20"/>
      <path d="M64 21h14v11H64z" fill="#d98d6c"/><path d="M64 16h12v5H64z" fill="#8994b8"/>
      <path d="M30 6l2-3 2 3v8h-4zM28 13h8v22h-8z" fill="#d9ad96"/><path d="M31 0h2v5h-2z" fill="#e0a31f"/><path d="M35 18h26v16H35z" fill="#e8c2a9"/><path d="M35 18h26v3H35z" fill="#cf9c84"/><path d="M48 13q5-9 10 0v6H48z" fill="#b98068"/><path d="M60 18h4v17h-4zM41 17l4 3v14h-4z" fill="#b98068"/><path d="M38.500 24v8M47.500 24v8M52.500 24v8M57.500 24v8M32 17v5" stroke="#a06d58" stroke-width="2"/>
    </svg></label>
  <div class="apps">
    <button class="view-all" aria-label="Task view"><svg width="20" height="20" viewBox="0 0 20 20" fill="none" stroke="#222" stroke-width="1.400"><path d="M3 6h9v8H3zM2 2v2h11V2M2 18v-2h11v2M17 2v4M17 12v6"/><circle cx="17" cy="9" r="1.400" fill="#222"/></svg></button>
    <button class="run" aria-label="File Explorer"><svg width="24" height="24" viewBox="0 0 24 24"><path d="M2 3h8l2 3h10v15H2z" fill="#f0b429"/><path d="M2 7h20v14H2z" fill="#ffd867"/><path d="M5 21v-7h14v7h-4v-3H9v3z" fill="#2b87d8"/></svg></button>
    <button aria-label="Store"><svg width="24" height="24" viewBox="0 0 24 24"><path d="M8 6V2.500h8V6" fill="none" stroke="#35b6f2" stroke-width="2"/><path d="M1 6h22v14q0 3-3 3H4q-3 0-3-3z" fill="#12589f"/><path d="M7 10h4v4H7z" fill="#f25022"/><path d="M13 10h4v4h-4z" fill="#7fba00"/><path d="M7 15.500h4v4H7z" fill="#35b6f2"/><path d="M13 15.500h4v4h-4z" fill="#ffb900"/></svg></button>
    <button aria-label="Mail"><svg width="24" height="24" viewBox="0 0 24 24"><path d="M0 9L12 1l12 8v13H0z" fill="#0f5aa8"/><path d="M3 8h18v7H3z" fill="#fff"/><path d="M0 9l12 8 12-8v14H0z" fill="#1f93dd"/><path d="M0 23L24 9v14z" fill="#36b5f0"/></svg><span class="badge">31</span></button>
    <button aria-label="Rewards"><svg width="24" height="24" viewBox="0 0 24 24"><rect width="24" height="24" rx="4" fill="#fff"/><path d="M4 9h7v4H4zM13 9h7v4h-7zM5 14h6v7H5zM13 14h6v7h-6z" fill="#c9202b"/><path d="M12 8q-6 0-5-3 2-3 5 3 3-6 5-3 1 3-5 3z" fill="none" stroke="#c9202b" stroke-width="1.700"/></svg></button>
    <button aria-label="Edge"><svg width="26" height="26" viewBox="0 0 26 26"><circle cx="13" cy="13" r="12" fill="#1576c4"/><path d="M1 12Q3 1 14 1t11 11q0 6-7 6-4-1-2-4 1-6-5-6T1 14z" fill="#2fbfd5"/><path d="M14 1q11 1 11 11 0 6-7 6-4-1-2-4 4-7-5-10z" fill="#56cf72"/><path d="M10 10q-5 4-2 10t12 3q-7 1-9-6-1-4 1-6z" fill="#0d4c94"/><path d="M15 14q-1 4 3 4 5 0 7-3-2 5-7 6-7-1-6-7z" fill="#d5d7d8"/></svg></button>
    <button class="run" aria-label="Chrome"><svg width="26" height="26" viewBox="0 0 26 26"><circle cx="13" cy="13" r="12" fill="#2f9e4f"/><path d="M2.500 7Q6 1 13 1q8 0 11 6.500H13z" fill="#e33b2e"/><path d="M2.500 7l6 9L13 8z" fill="#e33b2e"/><path d="M24 7.500q4 9-4 15.500-4 2-7 2l5-9q1-5-3-8.500z" fill="#fbc116"/><circle cx="13" cy="13" r="5.800" fill="#fff"/><circle cx="13" cy="13" r="4.600" fill="#3b7de8"/><circle cx="18.500" cy="18.500" r="7" fill="#2b1d1d"/><path d="M15 15q3-2 6 1l-2 1v6h-1.500v-6z" fill="#ddd"/></svg></button>
    <button class="run current" aria-label="SOLIDWORKS"><svg width="26" height="26" viewBox="0 0 26 26"><path d="M2 5l8-4 14 2v14l-8 5L2 19z" fill="#b5121b" stroke="#222"/><path d="M2 5l12 2 10-4M14 7v14" fill="none" stroke="#2a0505" stroke-width="1.200"/><text x="4" y="15" class="sw-l">S</text><text x="14.500" y="14" class="sw-l">W</text><text x="13" y="25" class="sw-y">2023</text></svg></button>
    <button aria-label="Planner"><svg width="24" height="24" viewBox="0 0 24 24"><path d="M1 1h22v22H1z" fill="#f2f5f7" stroke="#7fa6bd"/><path d="M1 1h22v5H1z" fill="#6fb2da"/><path d="M4 10l2 2 4-4M4 17l2 2 4-4" fill="none" stroke="#cf2127" stroke-width="2"/><path d="M12 11h8M12 18h8" stroke="#8896a0" stroke-width="1.500"/></svg></button>
    <button class="run" aria-label="McAfee"><svg width="24" height="24" viewBox="0 0 24 24"><path d="M1.500 1L12 6l10.500-5v18L12 24 1.500 19zM6 7.500v8.500l6 3 6-3V7.500l-6 3.200z" fill="#c4262e" fill-rule="evenodd"/></svg></button>
  </div>
  <div class="tray">
    <svg width="24" height="22" viewBox="0 0 24 22"><circle cx="12" cy="11" r="10" fill="#f79b1e"/><path d="M3 6a10 10 0 0118 0z" fill="#ffc928"/><path d="M1 5h11M9 9h14M4 13h10M1 17h9" stroke="#fbe3b0" stroke-width="1.600"/></svg>
    <span class="temp">-13°C</span>
    <svg width="14" height="14" viewBox="0 0 14 14"><path d="M1.500 10L7 4.500l5.500 5.500" fill="none" stroke="#222" stroke-width="1.400"/></svg>
    <svg width="16" height="16" viewBox="0 0 16 16" fill="none" stroke="#222" stroke-width="1.300"><path d="M3 4.500h7.500v7H3zM10.500 7l3-1.500v5l-3-1.500M4 2q3-1.500 6 0M4 14q3 1.500 6 0"/></svg>
    <svg width="16" height="16" viewBox="0 0 16 16"><path d="M3 12.500q-3-.5-2-3.500 1-2 3-1.500 2-4.500 6-2.500 2 1 2 3 3 0 3.500 2.500 0 2-2 2z" fill="#aaa" stroke="#222"/></svg>
    <svg width="18" height="18" viewBox="0 0 18 18"><path d="M1 3.500l14-2v12l-14-1.500z" fill="none" stroke="#222" stroke-width="1.300"/><path d="M5 7q3-3 6 0M11 4.500V7H8.500M10 9.500q-2 2-5 0M5 11.500V9.500h2" fill="none" stroke="#222"/><circle cx="13" cy="14" r="3.700" fill="#f7941d"/></svg>
    <svg width="16" height="16" viewBox="0 0 16 16" fill="none" stroke="#222" stroke-width="1.200"><path d="M2 14Q2 4 14 4M5 14q0-7 9-7M8 14q0-4 6-4"/><circle cx="12.500" cy="13.500" r="1" fill="#222"/></svg>
    <svg width="18" height="16" viewBox="0 0 18 16" fill="none" stroke="#222" stroke-width="1.200"><path d="M1.500 6H4l4-3.500v11L4 10H1.500zM10.500 5.500q2 2.500 0 5M12.500 3.500q3.500 4.500 0 9"/><path d="M14.500 1.500q5 6.500 0 13" stroke="#999"/></svg>
    <span class="lang">ENG</span>
    <time class="clock">5:44 PM<br>2023-03-07</time>
    <button class="notif" aria-label="Notifications"><svg width="18" height="18" viewBox="0 0 18 18"><path d="M1 2h16v12H7l-3 3v-3H1z"/><path d="M4 5.500h10M4 8.500h10M4 11.300h6" stroke="#ddd"/></svg><span class="badge">31</span></button>
  </div>
</nav>
</body>
</html>
```

FILE: styles.css
```css
* { box-sizing: border-box; }
html, body { margin: 0; }
body {
  display: flex; flex-direction: column; height: 100vh; overflow: hidden;
  background: #f7f7f7; color: #000;
  font: 12px/13px "Open Sans", "Noto Sans", sans-serif;
}
button { border: 0; padding: 0; margin: 0; background: none; font: inherit; color: inherit; display: flex; align-items: center; justify-content: center; }
input, select { font: inherit; border: 0; background: none; padding: 0; min-width: 0; outline: 0; }
svg { flex: none; display: block; }
.sprite { position: absolute; width: 0; height: 0; }
.i10s { width: 10px; height: 10px; }
.i10 { width: 10px; height: 18px; }
.i12 { width: 12px; height: 12px; }
.i17 { width: 17px; height: 17px; }
.i18 { width: 18px; height: 18px; }
.i19 { width: 19px; height: 19px; }
.i20 { width: 20px; height: 20px; }
.car { width: 6px; height: 4px; color: #333; }
.svg-abc { font: 10px "Open Sans", sans-serif; fill: #222; }
.svg-serif { font: bold 11px "Liberation Serif", serif; fill: #1d6b94; text-anchor: middle; }

/* title bar */
.titlebar { display: flex; align-items: center; flex: none; height: 37px; border-top: 2px solid #000; border-bottom: 1px solid #b9b9b9; padding-right: 1px; }
.brand { display: flex; align-items: center; align-self: stretch; width: 143px; border-right: 1px solid #b9b9b9; padding-left: 5px; }
.ds { width: 22px; height: 22px; margin-bottom: 4px; }
.wordmark { color: #d9251d; font: italic 400 13px/18px "Open Sans", sans-serif; padding-left: 4px; flex: 1; }
.wordmark b { font-weight: 800; }
.brand-tri { width: 5px; height: 9px; color: #777; margin-right: 6px; }
.quick { display: flex; align-items: center; padding-left: 21px; }
.qb { width: 28px; height: 28px; }
.qb.home { width: 30px; }
.qc { width: 16px; height: 28px; }
.qc.narrow { width: 12px; }
.qc.dim .car { color: #999; }
.qw { width: 30px; height: 28px; }
.selbox { display: flex; border: 1px solid #777; height: 30px; }
.sel-main { width: 29px; background: #b2b2b2; border-right: 1px solid #777; }
.sel-drop { width: 13px; }
.doc-title { flex: 1; margin: 0; text-align: center; font: inherit; font-size: 11px; }
.cmd-search { display: flex; align-items: center; width: 202px; height: 24px; border: 1px solid #b9b9b9; background: #fff; padding: 0 4px 0 6px; gap: 6px; }
.cmd-search input { flex: 1; color: #666; font-size: 11px; }
.cmd-search input::placeholder { color: #666; opacity: 1; }
.cmd-search button { color: #888; }
.cmd-search .car { color: #777; }
.prompt { width: 14px; height: 14px; background: #222; }
.winctl { display: flex; gap: 16px; padding-left: 11px; }
.winctl button { width: 20px; height: 28px; }

/* address bar */
.webbar { display: flex; align-items: center; gap: 9px; flex: none; height: 32px; border-bottom: 1px solid #b9b9b9; padding-left: 4px; }
.grip { width: 3px; height: 26px; border-left: 2px dotted #999; }
.webbar .grip { margin-right: 2px; }
.webbar button { width: 18px; height: 22px; }
.addr { display: flex; align-items: center; align-self: stretch; border-right: 1px solid #777; padding-right: 6px; }
.addr::before { content: ""; width: 1px; height: 22px; background: #777; margin-right: 4px; margin-left: -2px; }
.addr select { width: 257px; height: 25px; font-size: 11px; border: 1px solid #a3a3a3; background: #e1e1e1; padding-left: 3px; border-radius: 0; appearance: none; color: #000; background-image: linear-gradient(45deg, transparent 44%, #444 45%, #444 56%, transparent 57%), linear-gradient(-45deg, transparent 44%, #444 45%, #444 56%, transparent 57%); background-size: 5px 5px, 5px 5px; background-position: 242px 9px, 246px 9px; background-repeat: no-repeat; padding-right: 16px; }

/* ribbon */
.ribbon-row { display: flex; flex: none; }
.ribbon { display: flex; flex: 1; border-right: 1px solid #777; border-bottom: 1px solid #777; padding: 1px 0 2px; min-height: 82px; }
.group { display: flex; border-right: 1px solid #bdbdbd; }
.g1 { width: 268px; padding-left: 6px; }
.g2 { width: 269px; padding-left: 4px; }
.g3 { width: 231px; }
.g4 { width: 108px; }
.big { flex-direction: column; justify-content: flex-start; padding-top: 6px; height: 78px; }
.big span { margin-top: 1px; text-align: center; width: min-content; min-height: 26px; font-size: 11px; }
.big > .car { margin-top: 14px; }
.w36 { width: 36px; } .w42 { width: 42px; } .w46 { width: 46px; } .w51 { width: 51px; } .w60 { width: 60px; } .w63 { width: 63px; }
.small-col { display: flex; flex-direction: column; padding-left: 3px; }
.w64 { width: 64px; }
.g2 .small-col { padding-left: 5px; }
.g3 .small-col { padding-left: 4px; }
.small-col button { height: 26px; gap: 7px; padding-bottom: 1px; justify-content: flex-start; white-space: nowrap; font-size: 11px; }
.instant { margin-left: 1px; background: #b2b2b2; border: 1px solid #666; padding-top: 5px; }
.instant.big span { margin-top: 0; }
.collapse { margin: auto 7px 6px auto; }
.ribbon-side { width: 57px; border-left: 1px solid #999; margin-left: 2px; overflow: hidden; }
.mini { display: flex; align-items: center; gap: 11px; height: 31px; border-bottom: 1px solid #999; padding-left: 4px; }

/* ribbon tabs */
.tabs { display: flex; flex: none; background: #e5e5e5; height: 22px; }
.tabs button { background: #d2d2d2; color: #333; border-right: 1px solid #777; border-bottom: 1px solid #777; padding: 0 9px; font-size: 11px; }
.tabs .active { background: #f7f7f7; font-weight: bold; border-bottom: 0; padding: 0 7px 0 8px; }

/* work area */
.work { display: flex; flex: 1; min-height: 0; }
.tools { width: 48px; flex: none; padding: 5px 0 0 6px; display: flex; flex-direction: column; }
.tools::before { content: ""; height: 3px; flex: none; margin: 0 3px 5px -2px; border-top: 2px dotted #b5b5b5; }
.tools button { width: 20px; height: 26px; flex: none; }
.tools .with-caret { width: 34px; justify-content: space-between; }
.tools hr { width: 40px; margin: 2px 0 0 -1px; border: 0; border-top: 1px solid #888; flex: none; }
.tools hr.second { margin: 7px 0 5px -1px; }
.tools .more { margin: 10px 0 0 7px; }
.docwin { flex: 1; min-width: 0; display: flex; flex-direction: column; background: #b9d1ea; border: 1px solid #111; border-radius: 7px 7px 0 0; padding: 0 7px 7px 6px; box-shadow: inset -2px -2px 0 #4fd0ee; margin-bottom: 1px; }
.docbar { display: flex; align-items: center; gap: 3px; flex: none; height: 29px; margin: 0 -5px 0 -6px; padding: 5px 5px 0 8px; background: linear-gradient(#9ab5d3, #b9d1ea); border-radius: 7px 7px 0 0; }
.docbar span { color: #222; }
.docbtns { display: flex; gap: 2px; margin-left: auto; padding-right: 1px; }
.docbtns button { width: 32px; height: 18px; border: 1px solid #61789a; border-radius: 2px; background: linear-gradient(#c8dbee 45%, #9bb9d8 50%, #b8d2ea); box-shadow: inset 0 0 0 1px #d5e5f5; }
.docbtns .red { border-color: #541c22; background: linear-gradient(#e19a8c 45%, #bf3a28 50%, #d4705b); box-shadow: inset 0 0 0 1px #e9aaa0; }
.docbody { display: flex; flex: 1; min-height: 0; }
.panel { width: 230px; flex: none; display: flex; flex-direction: column; background: #f7f7f7; border-right: 1px solid #777; padding-right: 2px; }
.splitbar { flex: none; height: 17px; margin: 4px 0 0; border: 1px solid #c4c4c4; border-width: 1px 0; display: flex; align-items: center; justify-content: center; }
.splitbar i, .handle i { width: 6px; height: 6px; border: 1px solid #888; border-radius: 50%; background: #ddd; }
.ptabs { display: flex; flex: none; height: 26px; margin: 4px 0 0 2px; }
.ptabs button { width: 40px; background: #d4d4d4; border: 1px solid #888; border-left: 0; }
.ptabs .on { background: #f7f7f7; border-bottom-color: #f7f7f7; }
.ptabs .next { flex: 1; background: none; border-width: 0 0 1px; color: #333; border-color: #bbb; padding-left: 3px; }
.filterbox { flex: none; display: flex; align-items: center; height: 26px; margin: 0 3px 0 5px; border: 1px solid #bbb; padding-left: 2px; }
.filterbox input { flex: 1; }
.treewrap { flex: 1; display: flex; min-height: 0; }
.tree { list-style: none; margin: 0; padding: 0 0 0 5px; flex: 1; min-width: 0; overflow: hidden; font-size: 11px; }
.tree li { display: flex; align-items: center; height: 22px; gap: 5px; padding-left: 22px; white-space: nowrap; }
.tree .root { padding-left: 0; gap: 4px; }
.tree .ex { padding-left: 5px; }
.arr { width: 4px; height: 7px; margin: 0 8px 2px 0; color: #555; }
.vscroll { width: 15px; display: flex; flex-direction: column; align-items: center; color: #333; padding: 3px 0 2px; }
.vtrack { flex: 1; width: 15px; padding: 4px 0; background: #f0f0f0; }
.vthumb { background: #cdcdcd; height: 89%; }
.flip { transform: rotate(180deg); }
.hscroll { flex: none; display: flex; align-items: center; height: 18px; padding: 0 19px 0 4px; margin-bottom: 4px; border-top: 1px solid #eee; color: #333; background: #f0f0f0; }
.htrack { flex: 1; padding: 0 4px; }
.hthumb { height: 15px; width: 85%; background: #cdcdcd; }

/* graphics area */
.view { flex: 1; position: relative; min-width: 0; background: radial-gradient(ellipse 60% 42% at 100% 0%, #f1f2f4 0%, rgba(236, 238, 242, .6) 50%, rgba(230, 232, 240, 0) 100%), linear-gradient(to bottom, #fff0 45%, #fff 66%), linear-gradient(100deg, #fff 0%, #fdfdfe 30%, #eef0f6 58%, #dcdfea 82%, #dfe2ec 100%); }
.view::before { content: ""; position: absolute; inset: 28% 0 36%; background: linear-gradient(to bottom, #e1e4ee00, #e1e4ee 60%, #e1e4ee00); }
.scene { position: absolute; inset: 0; width: 100%; height: 100%; }
.hud { position: absolute; top: 6px; left: 50%; transform: translateX(-50%); margin-left: -2px; display: flex; gap: 6px; }
.hud button { height: 20px; width: 20px; opacity: .85; }
.hud .drop { width: 31px; margin-right: 3px; justify-content: space-between; }
.hud .drop .car { color: #888; }
.handle { position: absolute; left: -1px; top: 223px; width: 9px; height: 39px; border: 1px solid #888; border-left: 0; background: #f7f7f7; }
.triad { position: absolute; left: 11px; bottom: 1px; }
.triad svg { font: 8px "Open Sans", sans-serif; margin-bottom: 21px; overflow: visible; }
.triad strong { font: bold 11px/16px "DejaVu Sans", sans-serif; display: block; }

/* sheet tabs */
.sheets { display: flex; flex: none; height: 15px; border-top: 1px solid #777; background: #f7f7f7; padding-left: 2px; border-right: 1px solid #888; }
.sheets button { border-right: 1px solid #888; background: #d4d4d4; }
.sheets .nv { width: 16px; background: #c4c4c4; }
.nv svg { width: 14px; height: 14px; fill: #999; stroke: #888; }
.sheets .st { padding: 0 10px 2px; font-size: 12px; }
.sheets .st.on { background: #fff; font-weight: bold; }

/* task pane */
.taskpane { width: 25px; flex: none; padding: 29px 0 0 3px; background: linear-gradient(#e6e6e6, #fff); overflow: hidden; }
.taskpane button { width: 24px; height: 24px; border: 1px solid #999; border-top: 0; background: #d8d8d8; justify-content: flex-start; padding-left: 3px; }
.taskpane .on { background: #f7f7f7; border-top: 1px solid #999; }

.status { display: flex; align-items: center; flex: none; height: 18px; padding-left: 1px; border-top: 1px solid #999; overflow: hidden; font-size: 11px; }
.grow { flex: 1; }
.up { transform: rotate(180deg); margin: 0 26px 0 18px; }
.status .i17 { margin-right: -1px; }

/* desktop task bar */
.taskbar { display: flex; flex: none; height: 40px; background: #d5d6d8; font-size: 13px; }
.start { width: 49px; }
.tsearch { display: flex; align-items: center; width: 287px; background: #fff; border: 1px solid #c6c6c6; border-width: 1px 0 1px; padding-left: 10px; gap: 9px; overflow: hidden; }
.tsearch input { flex: 1; font-size: 14px; }
.tsearch input::placeholder { color: #444; opacity: 1; }
.apps { display: flex; gap: 1px; }
.apps button { width: 48px; position: relative; }
.apps .view-all { width: 50px; }
.apps .run::after { content: ""; position: absolute; left: 4px; right: 4px; bottom: 0; height: 2px; background: #0078d7; }
.apps .current { background: #eff0f1; }
.apps .current::after { left: 0; right: 0; }
.badge { position: absolute; left: 27px; top: 18px; width: 18px; height: 18px; border: 1px solid #777; border-radius: 50%; background: #d5d6d8; font: 11px/16px "Open Sans", sans-serif; text-align: center; }
.sw-l { font: bold 9px "Open Sans", sans-serif; fill: #fff; }
.sw-y { font: bold 8px "Open Sans", sans-serif; fill: #fff; stroke: #000; stroke-width: 2px; paint-order: stroke; text-anchor: middle; }
.tray { display: flex; align-items: center; margin-left: auto; padding-right: 7px; gap: 8px; color: #222; font-size: 12px; }
.temp { margin-right: 16px; font-size: 13px; }
.clock { text-align: center; font-size: 11px; line-height: 18px; margin-left: 5px; }
.notif { position: relative; width: 40px; align-self: stretch; }
.notif .badge { left: 19px; }
```
